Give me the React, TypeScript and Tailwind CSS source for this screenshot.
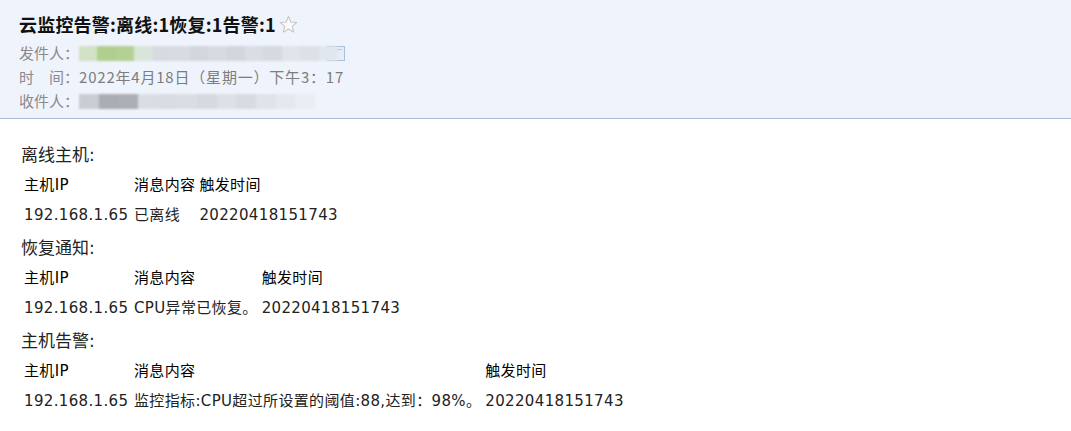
import React from 'react';

const cjk = '"DejaVu Sans", "Noto Sans CJK SC", sans-serif';

interface Row {
    ip: string;
    msg: string;
    time: string;
}

interface Section {
    title: string;
    rows: Row[];
}

const sections: Section[] = [
    { title: '离线主机:', rows: [{ ip: '192.168.1.65', msg: '已离线', time: '20220418151743' }] },
    { title: '恢复通知:', rows: [{ ip: '192.168.1.65', msg: 'CPU异常已恢复。', time: '20220418151743' }] },
    {
        title: '主机告警:',
        rows: [{ ip: '192.168.1.65', msg: '监控指标:CPU超过所设置的阈值:88,达到：98%。', time: '20220418151743' }],
    },
];

const Star = () => (
    <svg width="19" height="19" viewBox="0 0 20 20" className="ml-[3px]">
        <polygon
            points="10,1.5 12.5,7.3 18.7,7.8 14,11.9 15.4,18 10,14.8 4.6,18 6,11.9 1.3,7.8 7.5,7.3"
            fill="#fbfbfb"
            stroke="#c4c4c4"
            strokeWidth="1.1"
            strokeLinejoin="round"
        />
    </svg>
);

const CardIcon = () => (
    <svg width="18" height="15" viewBox="0 0 18 15" className="-ml-[10px]">
        <rect x="0.5" y="0.5" width="17" height="14" fill="#e4ecf6" stroke="#a9c0dc" />
        <line x1="3" y1="3.5" x2="15" y2="3.5" stroke="#b8cbe2" />
        <rect x="5" y="6" width="4" height="2" fill="#c3d3e6" />
    </svg>
);

// blurred address placeholder
const Blur = ({ tones, width }: { tones: string[]; width: number }) => (
    <div className="flex h-[15px] items-center blur-[1.2px]" style={{ width }}>
        {tones.map((c, i) => (
            <div key={i} className="h-full flex-1" style={{ backgroundColor: c }} />
        ))}
    </div>
);

const App: React.FC = () => {
    return (
        <div className="w-[1071px] h-[431px] bg-white overflow-hidden" style={{ fontFamily: cjk }}>
            <div className="bg-[#eff4fc] border-b border-[#a9bfd6] px-[19px] pt-[12px] pb-[5px]">
                <div className="flex items-center h-[24px]">
                    <h1 className="text-[18px] font-bold text-[#111] leading-[24px] tracking-[0.2px]" style={{ fontFamily: '"Noto Sans CJK SC", sans-serif' }}>
                        云监控告警:离线:1恢复:1告警:1
                    </h1>
                    <Star />
                </div>
                <div className="mt-[5px] text-[15px] text-[#8a8a8a]" style={{ fontFamily: '"Noto Sans CJK SC", sans-serif' }}>
                    <div className="flex items-center h-[24px]">
                        <span>发件人：</span>
                        <Blur
                            width={258}
                            tones={['#d2e2c4', '#b0cf8e', '#b3d194', '#d9e5da', '#d6dbe2', '#d8dce2', '#d3d7dd', '#d7dbe1', '#d2d7de', '#d9dde4', '#d5d9e0', '#e1e5ea', '#dde1e7', '#e2e7ee']}
                        />
                        <CardIcon />
                    </div>
                    <div className="flex items-center h-[24px] text-[#7d7d7d]">
                        <span className="text-[#8a8a8a]">时　间：</span>
                        <span className="tracking-[0.8px]">2022年4月18日（星期一）下午3：17</span>
                    </div>
                    <div className="flex items-center h-[24px] pt-[1px]">
                        <span>收件人：</span>
                        <Blur
                            width={236}
                            tones={['#c9ccd1', '#a9adb4', '#acafb3', '#d9dee5', '#d8dde3', '#dadee4', '#d6dae0', '#dde1e6', '#d8dce2', '#e0e4e9', '#e5e8ed', '#eaedf2']}
                        />
                    </div>
                </div>
            </div>

            <div className="px-[21px] pt-[19px] text-[#222]">
                {sections.map(section => (
                    <div key={section.title}>
                        <div className="pt-[3px] text-[17px] leading-[28px]">{section.title}</div>
                        <table className="border-separate border-spacing-[2px] text-[15px] tracking-[0.35px]">
                            <tbody>
                                <tr className="h-[28px] text-black">
                                    <td className="p-[1px] w-[108px]">主机IP</td>
                                    <td className="p-[1px]">消息内容</td>
                                    <td className="p-[1px]">触发时间</td>
                                </tr>
                                {section.rows.map(row => (
                                    <tr key={row.ip + row.time} className="h-[28px]">
                                        <td className="p-[1px] w-[108px]">{row.ip}</td>
                                        <td className="p-[1px]">{row.msg}</td>
                                        <td className="p-[1px]">{row.time}</td>
                                    </tr>
                                ))}
                            </tbody>
                        </table>
                    </div>
                ))}
            </div>
        </div>
    );
};

export default App;
